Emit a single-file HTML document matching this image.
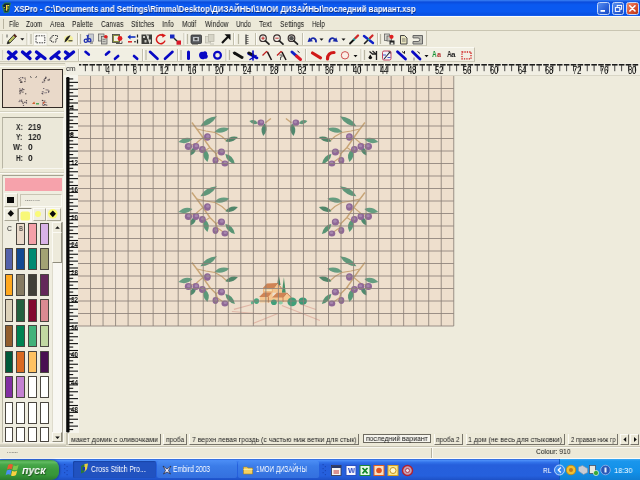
<!DOCTYPE html>
<html><head><meta charset="utf-8"><title>XSPro</title><style>
html,body{margin:0;padding:0;}
body{width:640px;height:480px;overflow:hidden;background:#eeebdc;font-family:"Liberation Sans",sans-serif;position:relative;}
div,svg,span.t{position:absolute;}
svg{overflow:visible;}
span.t{white-space:nowrap;line-height:1;transform-origin:0 50%;will-change:transform;}
</style></head>
<body>
<div style="left:0px;top:0px;width:640px;height:16px;background:linear-gradient(#3c82f4 0,#0a4cdc 13%,#0a59f0 30%,#0a59f0 72%,#0850e2 90%,#1662f2 100%);"></div>
<svg style="left:0px;top:0px" width="14" height="16" viewBox="0 0 14 16" ><path d="M2.4 5.2 L4.8 3 L10.4 3 L8.6 12 L4.4 12.6z" fill="#14243c" stroke="#2c8a3c" stroke-width="0.9"/><rect x="6" y="5" width="1.3" height="5.7" fill="#f0dc3c"/><rect x="7.3" y="5" width="1.9" height="1.3" fill="#f0dc3c"/><rect x="7.3" y="7.5" width="1.3" height="1.1" fill="#e8d038"/><rect x="3.7" y="7" width="1.1" height="1.1" fill="#d8e040"/><rect x="4.4" y="9.3" width="1" height="1" fill="#9ccc3c"/></svg>
<span class="t" style="left:14px;top:4.95px;font-size:8.5px;color:#fff;font-weight:bold;transform:scaleX(0.930);text-shadow:0.6px 0.6px 0 #0a2a80;">XSPro - C:\Documents and Settings\Rimma\Desktop\ДИЗАЙНЫ\1МОИ ДИЗАЙНЫ\последний вариант.xsp</span>
<div style="left:597px;top:2px;width:12.5px;height:12.5px;border:1px solid #c4d6f8;border-radius:2.5px;box-sizing:border-box;background:linear-gradient(135deg,#5a90f0,#2a60d8 60%,#1c4cc0);"><svg style="left:0px;top:0px" width="11" height="11" viewBox="0 0 11 11" ><rect x="2.5" y="7" width="4.5" height="1.8" fill="#fff"/></svg></div>
<div style="left:611.5px;top:2px;width:12.5px;height:12.5px;border:1px solid #c4d6f8;border-radius:2.5px;box-sizing:border-box;background:linear-gradient(135deg,#5a90f0,#2a60d8 60%,#1c4cc0);"><svg style="left:0px;top:0px" width="11" height="11" viewBox="0 0 11 11" ><rect x="4.2" y="2.4" width="4.4" height="3.8" fill="none" stroke="#fff" stroke-width="1"/><rect x="2.4" y="4.6" width="4.4" height="3.8" fill="#2b5fd8" stroke="#fff" stroke-width="1"/></svg></div>
<div style="left:626px;top:2px;width:12.5px;height:12.5px;border:1px solid #c4d6f8;border-radius:2.5px;box-sizing:border-box;background:linear-gradient(135deg,#f09070,#d85030 55%,#b83818);"><svg style="left:0px;top:0px" width="11" height="11" viewBox="0 0 11 11" ><path d="M2.8 2.8 L8 8 M8 2.8 L2.8 8" stroke="#fff" stroke-width="1.6" stroke-linecap="round"/></svg></div>
<div style="left:0px;top:16px;width:640px;height:14.5px;background:#ece9d8;border-top:1.5px solid #fdfdfa;border-bottom:1px solid #c9c5b2;box-sizing:border-box;"></div>
<div style="left:2.5px;top:19px;width:1px;height:10px;background:#b8b4a0;"></div>
<span class="t" style="left:8.7px;top:20.3px;font-size:8.3px;color:#111;transform:scaleX(0.740);">File</span>
<span class="t" style="left:26.2px;top:20.3px;font-size:8.3px;color:#111;transform:scaleX(0.768);">Zoom</span>
<span class="t" style="left:50px;top:20.3px;font-size:8.3px;color:#111;transform:scaleX(0.810);">Area</span>
<span class="t" style="left:72px;top:20.3px;font-size:8.3px;color:#111;transform:scaleX(0.813);">Palette</span>
<span class="t" style="left:100.5px;top:20.3px;font-size:8.3px;color:#111;transform:scaleX(0.800);">Canvas</span>
<span class="t" style="left:130.5px;top:20.3px;font-size:8.3px;color:#111;transform:scaleX(0.789);">Stitches</span>
<span class="t" style="left:162px;top:20.3px;font-size:8.3px;color:#111;transform:scaleX(0.852);">Info</span>
<span class="t" style="left:182px;top:20.3px;font-size:8.3px;color:#111;transform:scaleX(0.790);">Motif</span>
<span class="t" style="left:204.5px;top:20.3px;font-size:8.3px;color:#111;transform:scaleX(0.796);">Window</span>
<span class="t" style="left:235.5px;top:20.3px;font-size:8.3px;color:#111;transform:scaleX(0.756);">Undo</span>
<span class="t" style="left:259.2px;top:20.3px;font-size:8.3px;color:#111;transform:scaleX(0.828);">Text</span>
<span class="t" style="left:280px;top:20.3px;font-size:8.3px;color:#111;transform:scaleX(0.807);">Settings</span>
<span class="t" style="left:311.8px;top:20.3px;font-size:8.3px;color:#111;transform:scaleX(0.744);">Help</span>
<div style="left:0px;top:30.5px;width:426.5px;height:15.5px;background:#f1efe3;border-bottom:1px solid #cfccba;border-right:1px solid #c4c0ae;box-sizing:border-box;"></div>
<div style="left:0px;top:46.5px;width:474.5px;height:15.8px;background:#f1efe3;border-bottom:1px solid #cfccba;border-right:1px solid #c4c0ae;box-sizing:border-box;border-top:1px solid #faf9f2;"></div>
<svg style="left:0px;top:30.5px" width="640" height="16" viewBox="0 0 640 16" ><path d="M2.5 3 V13" stroke="#d2cfbf" stroke-width="1.1"/><path d="M7.2 12.8 L8.2 10 L14.5 3.2 L16.6 5.2 L10 12z" fill="#b8c060" stroke="#222" stroke-width="0.8"/><path d="M14.5 3.2 L16.6 5.2 L15.4 6.4 L13.4 4.4z" fill="#5a1c1c"/><path d="M7.2 12.8 L8.2 10 L10 12z" fill="#222"/><path d="M7 3.5 v3" stroke="#333" stroke-width="0.8"/><path d="M20.3 7.3 h4 l-2 2.2z" fill="#111"/><path d="M27 2 V14" stroke="#c2bfad" stroke-width="1"/><path d="M28 2 V14" stroke="#fbfaf5" stroke-width="1"/><path d="M31 3 V13" stroke="#b9b6a3" stroke-width="1.2"/><rect x="33.5" y="2" width="13.5" height="12.5" fill="#fbfaf6" stroke="#d8d5c6" stroke-width="0.6"/><rect x="36" y="4.8" width="8.8" height="7" fill="none" stroke="#333" stroke-width="0.9" stroke-dasharray="1.6 0.9"/><path d="M50 7 h2 v-2.5 h5.5 v3 h-1.5 v3.5 h-4.5 v-1.5 h-1.5z" fill="none" stroke="#333" stroke-width="0.9" stroke-dasharray="1.6 0.9"/><ellipse cx="68.5" cy="8" rx="4.5" ry="3.5" fill="#f4f0a0"/><path d="M64.5 11.5 C65 7 68 4.5 70.5 4.5 C69 7 67.5 10 64.5 11.5z" fill="#222"/><path d="M68.5 9.8 h4" stroke="#222" stroke-width="1"/><path d="M77.5 2 V14" stroke="#c2bfad" stroke-width="1"/><path d="M78.5 2 V14" stroke="#fbfaf5" stroke-width="1"/><path d="M80.5 3 V13" stroke="#b9b6a3" stroke-width="1.2"/><rect x="88.5" y="3" width="5" height="7.5" fill="#c8ccd0" stroke="#778" stroke-width="0.6"/><circle cx="85.8" cy="9.8" r="1.6" fill="none" stroke="#2030b0" stroke-width="1.3"/><circle cx="89.3" cy="9.3" r="1.6" fill="none" stroke="#2030b0" stroke-width="1.3"/><path d="M87 8 L88.5 4 M88.6 8 L86.8 4" stroke="#2030b0" stroke-width="1.1"/><path d="M90 12 h3" stroke="#555" stroke-width="1"/><rect x="98.5" y="3" width="5.5" height="7" fill="#d8d8d0" stroke="#555" stroke-width="0.7"/><rect x="101.5" y="5.5" width="5.5" height="7.5" fill="#c8c8c0" stroke="#555" stroke-width="0.7"/><circle cx="105.8" cy="5.8" r="1.8" fill="#e02020"/><path d="M102.5 8.5h3M102.5 10.5h3" stroke="#666" stroke-width="0.6"/><rect x="112.5" y="3.5" width="7" height="8" fill="#8a9040" stroke="#444" stroke-width="0.8"/><rect x="114" y="5" width="4.5" height="5" fill="#f0f0e0"/><circle cx="120" cy="7.5" r="2.4" fill="#e02020"/><path d="M116 12.5 h6 v-2" stroke="#444" stroke-width="0.9" fill="none"/><path d="M128.5 6 h7" stroke="#1030c0" stroke-width="1.6"/><path d="M127.5 6 l3 -2.6 v5.2z" fill="#1030c0"/><path d="M128 10.8 h4" stroke="#e02020" stroke-width="1.5"/><path d="M137.5 3.5 v3 M137.5 8.5 v4" stroke="#222" stroke-width="1.2"/><path d="M134 10.8 h2" stroke="#222" stroke-width="1"/><rect x="141.5" y="3.5" width="10.5" height="9.5" fill="#3c3c38"/><path d="M143 5h2v2h-2zM147 4.5h2v3h-2zM144.5 9h2v2.5h-2zM149 8.5h2v3h-2z" fill="#c8c8c0"/><path d="M146.5 3.5 l3.5 9.5" stroke="#e8e8e0" stroke-width="0.9"/><path d="M163.2 4.6 A4.4 4.4 0 1 0 165 9.6" fill="none" stroke="#d81818" stroke-width="1.5"/><path d="M161.8 2.6 l4.2 1.6 l-3.4 2.6z" fill="#d81818"/><rect x="170" y="3.5" width="4.5" height="4" fill="#1828c0"/><rect x="176.5" y="9.5" width="4.5" height="4.2" fill="#d81828"/><path d="M174 7.2 l3 2.8" stroke="#222" stroke-width="1.3"/><path d="M184 2 V14" stroke="#c2bfad" stroke-width="1"/><path d="M185 2 V14" stroke="#fbfaf5" stroke-width="1"/><path d="M187.5 3 V13" stroke="#b9b6a3" stroke-width="1.2"/><rect x="191" y="4" width="10.5" height="8.5" rx="1" fill="#55585c" stroke="#333" stroke-width="0.8"/><rect x="193" y="6" width="6" height="4.2" fill="#c0c4c8"/><path d="M194.5 7 h3 v2.2 h-3z" fill="#444"/><path d="M192 13.2 h6" stroke="#555" stroke-width="0.8"/><rect x="205.5" y="5.5" width="5" height="6.5" fill="#deddd0" stroke="#b8b6a8" stroke-width="0.7"/><rect x="208.5" y="3.5" width="5.5" height="7" fill="#d6d4c6" stroke="#b4b2a4" stroke-width="0.7"/><path d="M210 13 h4" stroke="#b8b6a8" stroke-width="0.8"/><path d="M222 12 L228.5 5.2" stroke="#111" stroke-width="2.1"/><path d="M224.5 3.3 h6 v6z" fill="#111"/><path d="M233.5 2 V14" stroke="#c2bfad" stroke-width="1"/><path d="M234.5 2 V14" stroke="#fbfaf5" stroke-width="1"/><path d="M238.5 3 V13" stroke="#b9b6a3" stroke-width="1.2"/><path d="M246 3.5 v10" stroke="#222" stroke-width="1.1"/><path d="M246 4.5h2.5M246 6.5h2.5M246 8.5h2.5M246 10.5h2.5M246 12.5h2.5" stroke="#444" stroke-width="0.7"/><path d="M255.5 2 V14" stroke="#c2bfad" stroke-width="1"/><path d="M256.5 2 V14" stroke="#fbfaf5" stroke-width="1"/><circle cx="263" cy="7.2" r="3.3" fill="#f0ece4" stroke="#3a3030" stroke-width="1.2"/><path d="M265.4 9.8 l3.6 3.4" stroke="#222" stroke-width="1.7" stroke-linecap="round"/><path d="M261.3 7.2 h3.4 M263 5.5 v3.4" stroke="#c02020" stroke-width="0.9"/><circle cx="277" cy="7.2" r="3.3" fill="#f0ece4" stroke="#3a3030" stroke-width="1.2"/><path d="M279.4 9.8 l3.6 3.4" stroke="#222" stroke-width="1.7" stroke-linecap="round"/><path d="M275.3 7.2 h3.4" stroke="#c02020" stroke-width="0.9"/><circle cx="291.5" cy="7.2" r="3.3" fill="#f0ece4" stroke="#3a3030" stroke-width="1.2"/><path d="M293.9 9.8 l3.6 3.4" stroke="#222" stroke-width="1.7" stroke-linecap="round"/><circle cx="291.5" cy="7.2" r="2.3" fill="#555"/><path d="M302.5 2 V14" stroke="#c2bfad" stroke-width="1"/><path d="M303.5 2 V14" stroke="#fbfaf5" stroke-width="1"/><path d="M316 11.3 C316.4 7 312.4 6 310.6 8.8" fill="none" stroke="#1828a8" stroke-width="1.8"/><path d="M307.6 11 L309.2 6.4 L313 10.2z" fill="#1828a8"/><path d="M319.5 7.5 h4 l-2 2.2z" fill="#111"/><path d="M329.5 11.3 C329.1 7 333.1 6 334.9 8.8" fill="none" stroke="#1828a8" stroke-width="1.8"/><path d="M337.9 11 L336.3 6.4 L332.5 10.2z" fill="#1828a8"/><path d="M341.5 7.5 h4 l-2 2.2z" fill="#111"/><path d="M350 12.5 L354 8.5" stroke="#111" stroke-width="1.8" stroke-linecap="round"/><path d="M353.5 9 L355.5 7" stroke="#18a0a0" stroke-width="2"/><path d="M355.5 7 L358 4.5" stroke="#d02828" stroke-width="2.4" stroke-linecap="round"/><path d="M364 5 L373 12" stroke="#1020c8" stroke-width="2.4" stroke-linecap="round"/><path d="M364.5 12.5 L368 9" stroke="#222" stroke-width="1.6" stroke-linecap="round"/><path d="M368 9 L370 7" stroke="#18a0a0" stroke-width="1.8"/><path d="M370 7 L372.5 4.5" stroke="#d02828" stroke-width="2.2" stroke-linecap="round"/><path d="M377.5 2 V14" stroke="#c2bfad" stroke-width="1"/><path d="M378.5 2 V14" stroke="#fbfaf5" stroke-width="1"/><path d="M380.5 3 V13" stroke="#b9b6a3" stroke-width="1.2"/><rect x="384.5" y="3" width="5" height="6.5" fill="#d8d8d0" stroke="#555" stroke-width="0.7"/><rect x="387" y="5" width="4.5" height="5" fill="#c8c8c0" stroke="#555" stroke-width="0.7"/><circle cx="391.5" cy="5.8" r="2.1" fill="#e02020"/><rect x="389.5" y="9.5" width="5" height="4" fill="#222"/><rect x="390.7" y="11.5" width="2.6" height="2" fill="#e8e8e0"/><path d="M400.5 4.5 h4 l2.5 2.5 v6 h-6.5z" fill="#e8e4c0" stroke="#333" stroke-width="0.9"/><path d="M402 8 h3.5 M402 10 h3.5" stroke="#555" stroke-width="0.7"/><path d="M413 4.5 h9.5 v8.5 h-9.5 v-2.5 h5 a1.8 1.8 0 0 0 0 -3.6 h-5z" fill="#b8b8b0" stroke="#666" stroke-width="1"/></svg>
<svg style="left:0px;top:46.5px" width="640" height="16" viewBox="0 0 640 16" ><path d="M2.5 3 V13" stroke="#d2cfbf" stroke-width="1.1"/><path d="M8.5 5 L16 11.5 M16 5 L8.5 11.5" stroke="#0808c4" stroke-width="3.4" stroke-linecap="round" fill="none"/><path d="M22.5 5 L30 11.5 M30 5 L26.3 8.2" stroke="#0808c4" stroke-width="3.4" stroke-linecap="round" fill="none"/><path d="M36.5 5 L45 11.5 M36.8 11.5 L40.6 8.2" stroke="#0808c4" stroke-width="3.4" stroke-linecap="round" fill="none"/><path d="M59 5 L51 11.5 M59.2 11.5 L55 8.2" stroke="#0808c4" stroke-width="3.4" stroke-linecap="round" fill="none"/><path d="M73.5 5 L65.5 11.5 M65.5 5 L69.5 8.2" stroke="#0808c4" stroke-width="3.4" stroke-linecap="round" fill="none"/><path d="M78.5 2 V14" stroke="#c2bfad" stroke-width="1"/><path d="M79.5 2 V14" stroke="#fbfaf5" stroke-width="1"/><path d="M85.5 4.8 L88.8 7.6" stroke="#0808c4" stroke-width="2.6" stroke-linecap="round" fill="none"/><path d="M109.2 4.8 L106 7.6" stroke="#0808c4" stroke-width="2.6" stroke-linecap="round" fill="none"/><path d="M118.2 9 L115 11.8" stroke="#0808c4" stroke-width="2.6" stroke-linecap="round" fill="none"/><path d="M134 9 L137.2 11.8" stroke="#0808c4" stroke-width="2.6" stroke-linecap="round" fill="none"/><path d="M142.5 2 V14" stroke="#c2bfad" stroke-width="1"/><path d="M143.5 2 V14" stroke="#fbfaf5" stroke-width="1"/><path d="M146 3 V13" stroke="#b9b6a3" stroke-width="1.2"/><path d="M150 4.8 L157.5 11.8" stroke="#0808c4" stroke-width="2.6" stroke-linecap="round" fill="none"/><path d="M172.5 4.8 L165 11.8" stroke="#0808c4" stroke-width="2.6" stroke-linecap="round" fill="none"/><path d="M177.5 2 V14" stroke="#c2bfad" stroke-width="1"/><path d="M178.5 2 V14" stroke="#fbfaf5" stroke-width="1"/><path d="M181 3 V13" stroke="#b9b6a3" stroke-width="1.2"/><path d="M188.5 5 V11.5" stroke="#0808c4" stroke-width="3" stroke-linecap="round" fill="none"/><path d="M199 8 c0 -3 3 -4 4 -3 c2 -2 5 0 4 2.5 c2 2 0 5 -2.5 4.2 c-2 1.5 -5.5 0 -5.5 -3.7z" fill="#0808c4"/><circle cx="217.5" cy="8.3" r="3.4" fill="none" stroke="#0808c4" stroke-width="2.2"/><path d="M226 2 V14" stroke="#c2bfad" stroke-width="1"/><path d="M227 2 V14" stroke="#fbfaf5" stroke-width="1"/><path d="M229.5 3 V13" stroke="#b9b6a3" stroke-width="1.2"/><path d="M234.5 6 L242 10.5" stroke="#111" stroke-width="3" stroke-linecap="round" fill="none"/><path d="M248.5 6.5 L257 11" stroke="#0808c4" stroke-width="2.6" stroke-linecap="round" fill="none"/><path d="M249 6 L253 8" stroke="#111" stroke-width="2.8" stroke-linecap="round" fill="none"/><path d="M253 4 V13" stroke="#0808c4" stroke-width="1.6" stroke-linecap="round" fill="none"/><path d="M250 12.5 L256 8.5" stroke="#0808c4" stroke-width="1.4" stroke-linecap="round" fill="none"/><path d="M262.5 8.5 L266.5 4.5 L268 5.5" fill="none" stroke="#c02020" stroke-width="1.3"/><path d="M267.5 5.2 L271.5 13" stroke="#221818" stroke-width="1.5"/><path d="M277 8.5 L281 4.5 L282.5 5.5" fill="none" stroke="#c02020" stroke-width="1.3"/><path d="M282 5.2 L286 13" stroke="#221818" stroke-width="1.5"/><path d="M279.5 8 h2.5 v2 h-1.5 v3" stroke="#555" stroke-width="1" fill="none"/><path d="M292 5 L296.5 9" stroke="#1020c8" stroke-width="3" stroke-linecap="round" fill="none"/><path d="M296.5 9 L300.5 12.5" stroke="#d81828" stroke-width="3" stroke-linecap="round" fill="none"/><path d="M297.5 4 l2 1.5" stroke="#222" stroke-width="1"/><path d="M305.5 2 V14" stroke="#c2bfad" stroke-width="1"/><path d="M306.5 2 V14" stroke="#fbfaf5" stroke-width="1"/><path d="M312.5 6 L320.5 10.8" stroke="#d01818" stroke-width="3.2" stroke-linecap="round" fill="none"/><path d="M327.5 12 C327.5 8 330 5.5 334 5.5" fill="none" stroke="#d01818" stroke-width="3.2" stroke-linecap="round"/><circle cx="345" cy="8.3" r="3.7" fill="#fbeee6" stroke="#c84040" stroke-width="0.9"/><path d="M353.5 8 h4 l-2 2.2z" fill="#111"/><path d="M361 2 V14" stroke="#c2bfad" stroke-width="1"/><path d="M362 2 V14" stroke="#fbfaf5" stroke-width="1"/><path d="M364.5 3 V13" stroke="#b9b6a3" stroke-width="1.2"/><path d="M369.5 4.5 L373 7.5 M376.5 4 V13 M372 7 h4.5" stroke="#222" stroke-width="1.3" fill="none"/><path d="M368.5 10.5 a1.8 1.8 0 1 0 3.6 0 l-1.8 -3z" fill="#111"/><path d="M372.5 4 l3.5 3" stroke="#222" stroke-width="1.2"/><rect x="382.5" y="4" width="8.5" height="9" rx="1.5" fill="#eef0f8" stroke="#c03050" stroke-width="0.9"/><path d="M384 12 L390 5" stroke="#223" stroke-width="1.1"/><path d="M383 8 h3 M387.5 10.5 h3" stroke="#3040c0" stroke-width="0.9"/><path d="M388 4.5 h2.5 v2.5z" fill="#222"/><path d="M397.5 4.8 L405.5 12" stroke="#0808c4" stroke-width="2.8" stroke-linecap="round" fill="none"/><path d="M402 4.5 l2.5 2 M404.5 4 v2.5" stroke="#222" stroke-width="1"/><path d="M412.5 4.8 L420 12" stroke="#0808c4" stroke-width="2.8" stroke-linecap="round" fill="none"/><path d="M417.5 4.5 l2.5 2" stroke="#222" stroke-width="1"/><path d="M414 10.5 v3" stroke="#666" stroke-width="0.8"/><path d="M424.5 8 h4 l-2 2.2z" fill="#111"/><path d="M462 5 h9 v6.8 h-9z" fill="none" stroke="#d02020" stroke-width="1.3" stroke-dasharray="1.3 1.1"/></svg>
<span class="t" style="left:432px;top:50.25px;font-size:8.5px;color:#109030;font-weight:bold;transform:scaleX(0.733);">A</span>
<span class="t" style="left:436.5px;top:51.2px;font-size:8px;color:#b02828;font-weight:bold;transform:scaleX(0.898);">a</span>
<span class="t" style="left:446.5px;top:50.25px;font-size:8.5px;color:#222;font-weight:bold;transform:scaleX(0.733);">A</span>
<span class="t" style="left:451px;top:51.2px;font-size:8px;color:#222;font-weight:bold;transform:scaleX(1.011);">a</span>
<div style="left:0px;top:62.5px;width:66px;height:381px;background:#ece9d8;"></div>
<div style="left:0px;top:63px;width:65px;height:1px;background:#c8c5b4;"></div>
<div style="left:0px;top:66px;width:65px;height:1px;background:#fbfaf4;"></div>
<div style="left:2px;top:69px;width:61px;height:39px;background:#e9d9c9;border:1.6px solid #332b26;box-sizing:border-box;"></div>
<svg style="left:0px;top:0px" width="66" height="110" viewBox="0 0 66 110" ><rect x="20.2" y="77.1" width="1.2" height="1" fill="#7a7078"/><rect x="22.0" y="77.0" width="1.2" height="1" fill="#5a5058"/><rect x="21.5" y="81.6" width="1.2" height="1" fill="#5a5058"/><rect x="20.1" y="79.5" width="1.2" height="1" fill="#403838"/><rect x="24.3" y="81.1" width="1.2" height="1" fill="#403838"/><rect x="20.1" y="81.7" width="1.2" height="1" fill="#403838"/><rect x="24.4" y="77.6" width="1.2" height="1" fill="#403838"/><rect x="20.6" y="81.4" width="1.2" height="1" fill="#403838"/><rect x="19.1" y="79.9" width="1.2" height="1" fill="#7a7078"/><rect x="22.2" y="77.5" width="1.2" height="1" fill="#7a7078"/><rect x="20.6" y="81.8" width="1.2" height="1" fill="#403838"/><rect x="18.6" y="78.1" width="1.2" height="1" fill="#403838"/><rect x="24.8" y="79.3" width="1.2" height="1" fill="#7a7078"/><rect x="21.6" y="89.6" width="1.2" height="1" fill="#7a7078"/><rect x="19.7" y="89.7" width="1.2" height="1" fill="#5a5058"/><rect x="19.1" y="90.6" width="1.2" height="1" fill="#403838"/><rect x="22.3" y="91.6" width="1.2" height="1" fill="#403838"/><rect x="19.6" y="91.8" width="1.2" height="1" fill="#5a5058"/><rect x="21.6" y="89.1" width="1.2" height="1" fill="#7a7078"/><rect x="20.5" y="90.0" width="1.2" height="1" fill="#403838"/><rect x="23.2" y="89.1" width="1.2" height="1" fill="#403838"/><rect x="19.2" y="88.3" width="1.2" height="1" fill="#6a6068"/><rect x="20.6" y="91.3" width="1.2" height="1" fill="#6a6068"/><rect x="19.4" y="93.2" width="1.2" height="1" fill="#403838"/><rect x="21.9" y="88.2" width="1.2" height="1" fill="#5a5058"/><rect x="25.1" y="93.3" width="1.2" height="1" fill="#403838"/><rect x="18.6" y="101.1" width="1.2" height="1" fill="#6a6068"/><rect x="24.2" y="101.8" width="1.2" height="1" fill="#5a5058"/><rect x="20.7" y="100.6" width="1.2" height="1" fill="#7a7078"/><rect x="20.7" y="100.9" width="1.2" height="1" fill="#6a6068"/><rect x="21.0" y="99.6" width="1.2" height="1" fill="#5a5058"/><rect x="21.9" y="101.5" width="1.2" height="1" fill="#403838"/><rect x="25.9" y="102.7" width="1.2" height="1" fill="#7a7078"/><rect x="25.8" y="101.9" width="1.2" height="1" fill="#6a6068"/><rect x="19.3" y="99.8" width="1.2" height="1" fill="#6a6068"/><rect x="22.9" y="104.9" width="1.2" height="1" fill="#5a5058"/><rect x="22.5" y="102.8" width="1.2" height="1" fill="#403838"/><rect x="25.9" y="100.2" width="1.2" height="1" fill="#403838"/><rect x="24.2" y="101.8" width="1.2" height="1" fill="#6a6068"/><rect x="45.0" y="77.9" width="1.2" height="1" fill="#7a7078"/><rect x="45.1" y="77.7" width="1.2" height="1" fill="#7a7078"/><rect x="43.3" y="81.5" width="1.2" height="1" fill="#6a6068"/><rect x="45.2" y="76.7" width="1.2" height="1" fill="#403838"/><rect x="43.4" y="79.4" width="1.2" height="1" fill="#6a6068"/><rect x="44.6" y="78.0" width="1.2" height="1" fill="#403838"/><rect x="41.9" y="81.7" width="1.2" height="1" fill="#5a5058"/><rect x="48.8" y="78.8" width="1.2" height="1" fill="#5a5058"/><rect x="45.2" y="77.0" width="1.2" height="1" fill="#6a6068"/><rect x="48.4" y="79.7" width="1.2" height="1" fill="#6a6068"/><rect x="44.0" y="80.2" width="1.2" height="1" fill="#403838"/><rect x="47.5" y="79.5" width="1.2" height="1" fill="#403838"/><rect x="44.0" y="78.7" width="1.2" height="1" fill="#7a7078"/><rect x="42.1" y="93.4" width="1.2" height="1" fill="#6a6068"/><rect x="41.8" y="93.0" width="1.2" height="1" fill="#6a6068"/><rect x="47.2" y="89.5" width="1.2" height="1" fill="#5a5058"/><rect x="47.9" y="91.9" width="1.2" height="1" fill="#7a7078"/><rect x="45.7" y="92.2" width="1.2" height="1" fill="#7a7078"/><rect x="43.1" y="88.0" width="1.2" height="1" fill="#6a6068"/><rect x="41.6" y="92.9" width="1.2" height="1" fill="#5a5058"/><rect x="44.4" y="92.3" width="1.2" height="1" fill="#7a7078"/><rect x="48.0" y="91.1" width="1.2" height="1" fill="#6a6068"/><rect x="42.7" y="91.4" width="1.2" height="1" fill="#7a7078"/><rect x="48.3" y="90.5" width="1.2" height="1" fill="#5a5058"/><rect x="41.8" y="91.3" width="1.2" height="1" fill="#7a7078"/><rect x="45.6" y="89.4" width="1.2" height="1" fill="#6a6068"/><rect x="41.8" y="99.9" width="1.2" height="1" fill="#5a5058"/><rect x="43.7" y="101.4" width="1.2" height="1" fill="#5a5058"/><rect x="42.1" y="102.5" width="1.2" height="1" fill="#7a7078"/><rect x="43.0" y="105.0" width="1.2" height="1" fill="#7a7078"/><rect x="43.2" y="102.2" width="1.2" height="1" fill="#7a7078"/><rect x="42.2" y="100.1" width="1.2" height="1" fill="#403838"/><rect x="45.3" y="101.9" width="1.2" height="1" fill="#7a7078"/><rect x="42.0" y="104.4" width="1.2" height="1" fill="#6a6068"/><rect x="46.2" y="104.7" width="1.2" height="1" fill="#7a7078"/><rect x="44.6" y="104.0" width="1.2" height="1" fill="#6a6068"/><rect x="44.2" y="100.4" width="1.2" height="1" fill="#6a6068"/><rect x="43.9" y="104.3" width="1.2" height="1" fill="#403838"/><rect x="45.5" y="104.6" width="1.2" height="1" fill="#6a6068"/><path d="M30 76.5 l1.5 1 M37 76.5 l-1.5 1" stroke="#444" stroke-width="1"/><path d="M32 104 l2.2 -2.5 l1 2.5z" fill="#d06030"/><path d="M36 103.800 h3" stroke="#30a040" stroke-width="1.2"/><path d="M43 103.5 l1.5 -1.5" stroke="#d05030" stroke-width="1.2"/></svg>
<div style="left:0px;top:112px;width:65px;height:1px;background:#fbfaf4;"></div>
<div style="left:0px;top:111px;width:65px;height:1px;background:#d4d1c0;"></div>
<div style="left:2px;top:116.5px;width:61.5px;height:52px;background:#ebe8d9;border:1px solid #f8f7f0;border-top:1.5px solid #9c998a;border-left:1px solid #b8b5a4;box-sizing:border-box;"></div>
<span class="t" style="left:15.5px;top:122.75px;font-size:8.5px;color:#222;font-weight:bold;transform:scaleX(0.800);">X:</span>
<span class="t" style="left:28px;top:122.75px;font-size:8.5px;color:#222;font-weight:bold;transform:scaleX(0.916);">219</span>
<span class="t" style="left:16px;top:132.75px;font-size:8.5px;color:#222;font-weight:bold;transform:scaleX(0.800);">Y:</span>
<span class="t" style="left:28px;top:132.75px;font-size:8.5px;color:#222;font-weight:bold;transform:scaleX(0.916);">120</span>
<span class="t" style="left:13px;top:142.75px;font-size:8.5px;color:#222;font-weight:bold;transform:scaleX(0.869);">W:</span>
<span class="t" style="left:28px;top:142.75px;font-size:8.5px;color:#222;font-weight:bold;transform:scaleX(0.950);">0</span>
<span class="t" style="left:15.5px;top:153.75px;font-size:8.5px;color:#222;font-weight:bold;transform:scaleX(0.757);">H:</span>
<span class="t" style="left:28px;top:153.75px;font-size:8.5px;color:#222;font-weight:bold;transform:scaleX(0.950);">0</span>
<div style="left:0px;top:171.5px;width:65px;height:1px;background:#d4d1c0;"></div>
<div style="left:0px;top:172.5px;width:65px;height:1px;background:#fbfaf4;"></div>
<div style="left:2px;top:175px;width:61.5px;height:267.8px;background:#efede0;border:1px solid #f8f7f0;border-top:1.5px solid #a4a192;border-left:1px solid #b8b5a4;box-sizing:border-box;"></div>
<div style="left:4.5px;top:177.5px;width:57.5px;height:13.5px;background:#f6a2ab;"></div>
<div style="left:4px;top:193px;width:13.5px;height:14px;border:1px solid #fbfaf4;border-right-color:#c0bdac;border-bottom-color:#c0bdac;box-sizing:border-box;"></div>
<div style="left:7px;top:197px;width:7px;height:6px;background:#0a0a0a;"></div>
<div style="left:20px;top:193.5px;width:42px;height:13.5px;border:1px solid #c8c5b4;border-right-color:#fbfaf4;border-bottom-color:#fbfaf4;box-sizing:border-box;"></div>
<span class="t" style="left:25px;top:196.5px;font-size:6px;color:#444;transform:scaleX(0.695);letter-spacing:0.7px;">--------</span>
<div style="left:4px;top:207.5px;width:13.5px;height:13px;border:1px solid #fbfaf4;border-right-color:#aaa796;border-bottom-color:#aaa796;box-sizing:border-box;"></div>
<div style="left:18px;top:207.5px;width:14px;height:14px;background:#f8f7ef;border:1px solid #8a8778;border-right-color:#fbfaf4;border-bottom-color:#fbfaf4;box-sizing:border-box;"></div>
<div style="left:32.5px;top:207.5px;width:13px;height:13px;border:1px solid #fbfaf4;border-right-color:#aaa796;border-bottom-color:#aaa796;box-sizing:border-box;"></div>
<div style="left:46px;top:207.5px;width:15px;height:13px;border:1px solid #fbfaf4;border-right-color:#aaa796;border-bottom-color:#aaa796;box-sizing:border-box;"></div>
<svg style="left:0px;top:0px" width="66" height="222" viewBox="0 0 66 222" ><path d="M10.8 210 l3.2 3.4 l-3.2 3.4 l-3.2 -3.4z" fill="#0a0a0a"/><rect x="20.5" y="211.4" width="9.5" height="9.2" rx="2.2" fill="#f8f878"/><circle cx="38" cy="214" r="3" fill="#fafa78"/><circle cx="52.8" cy="213.8" r="4.8" fill="#fafa70"/><path d="M52.8 210.4 l3.2 3.4 l-3.2 3.4 l-3.2 -3.4z" fill="#0a0a0a"/></svg>
<div style="left:16.3px;top:222.5px;width:8.7px;height:22.3px;background:#e9d9c9;border:1px solid #4a4640;box-sizing:border-box;border-radius:0.5px;"></div>
<div style="left:28.2px;top:222.5px;width:8.7px;height:22.3px;background:#f4a0a8;border:1px solid #4a4640;box-sizing:border-box;border-radius:0.5px;"></div>
<div style="left:40.1px;top:222.5px;width:8.7px;height:22.3px;background:#d9b2e8;border:1px solid #4a4640;box-sizing:border-box;border-radius:0.5px;"></div>
<div style="left:4.5px;top:248.1px;width:8.7px;height:22.3px;background:#5462aa;border:1px solid #4a4640;box-sizing:border-box;border-radius:0.5px;"></div>
<div style="left:16.3px;top:248.1px;width:8.7px;height:22.3px;background:#134a92;border:1px solid #4a4640;box-sizing:border-box;border-radius:0.5px;"></div>
<div style="left:28.2px;top:248.1px;width:8.7px;height:22.3px;background:#008a72;border:1px solid #4a4640;box-sizing:border-box;border-radius:0.5px;"></div>
<div style="left:40.1px;top:248.1px;width:8.7px;height:22.3px;background:#a3a274;border:1px solid #4a4640;box-sizing:border-box;border-radius:0.5px;"></div>
<div style="left:4.5px;top:273.7px;width:8.7px;height:22.3px;background:#ffa81e;border:1px solid #4a4640;box-sizing:border-box;border-radius:0.5px;"></div>
<div style="left:16.3px;top:273.7px;width:8.7px;height:22.3px;background:#857a62;border:1px solid #4a4640;box-sizing:border-box;border-radius:0.5px;"></div>
<div style="left:28.2px;top:273.7px;width:8.7px;height:22.3px;background:#403f38;border:1px solid #4a4640;box-sizing:border-box;border-radius:0.5px;"></div>
<div style="left:40.1px;top:273.7px;width:8.7px;height:22.3px;background:#64285a;border:1px solid #4a4640;box-sizing:border-box;border-radius:0.5px;"></div>
<div style="left:4.5px;top:299.3px;width:8.7px;height:22.3px;background:#dcd2ba;border:1px solid #4a4640;box-sizing:border-box;border-radius:0.5px;"></div>
<div style="left:16.3px;top:299.3px;width:8.7px;height:22.3px;background:#22603f;border:1px solid #4a4640;box-sizing:border-box;border-radius:0.5px;"></div>
<div style="left:28.2px;top:299.3px;width:8.7px;height:22.3px;background:#82082e;border:1px solid #4a4640;box-sizing:border-box;border-radius:0.5px;"></div>
<div style="left:40.1px;top:299.3px;width:8.7px;height:22.3px;background:#da8a92;border:1px solid #4a4640;box-sizing:border-box;border-radius:0.5px;"></div>
<div style="left:4.5px;top:324.9px;width:8.7px;height:22.3px;background:#925f2e;border:1px solid #4a4640;box-sizing:border-box;border-radius:0.5px;"></div>
<div style="left:16.3px;top:324.9px;width:8.7px;height:22.3px;background:#008252;border:1px solid #4a4640;box-sizing:border-box;border-radius:0.5px;"></div>
<div style="left:28.2px;top:324.9px;width:8.7px;height:22.3px;background:#43b27a;border:1px solid #4a4640;box-sizing:border-box;border-radius:0.5px;"></div>
<div style="left:40.1px;top:324.9px;width:8.7px;height:22.3px;background:#c2d8a2;border:1px solid #4a4640;box-sizing:border-box;border-radius:0.5px;"></div>
<div style="left:4.5px;top:350.5px;width:8.7px;height:22.3px;background:#005a3a;border:1px solid #4a4640;box-sizing:border-box;border-radius:0.5px;"></div>
<div style="left:16.3px;top:350.5px;width:8.7px;height:22.3px;background:#d96a22;border:1px solid #4a4640;box-sizing:border-box;border-radius:0.5px;"></div>
<div style="left:28.2px;top:350.5px;width:8.7px;height:22.3px;background:#ffc262;border:1px solid #4a4640;box-sizing:border-box;border-radius:0.5px;"></div>
<div style="left:40.1px;top:350.5px;width:8.7px;height:22.3px;background:#4a1052;border:1px solid #4a4640;box-sizing:border-box;border-radius:0.5px;"></div>
<div style="left:4.5px;top:376.1px;width:8.7px;height:22.3px;background:#822fa2;border:1px solid #4a4640;box-sizing:border-box;border-radius:0.5px;"></div>
<div style="left:16.3px;top:376.1px;width:8.7px;height:22.3px;background:#c482d2;border:1px solid #4a4640;box-sizing:border-box;border-radius:0.5px;"></div>
<div style="left:28.2px;top:376.1px;width:8.7px;height:22.3px;background:#ffffff;border:1px solid #4a4640;box-sizing:border-box;border-radius:0.5px;"></div>
<div style="left:40.1px;top:376.1px;width:8.7px;height:22.3px;background:#ffffff;border:1px solid #4a4640;box-sizing:border-box;border-radius:0.5px;"></div>
<div style="left:4.5px;top:401.7px;width:8.7px;height:22.3px;background:#ffffff;border:1px solid #4a4640;box-sizing:border-box;border-radius:0.5px;"></div>
<div style="left:16.3px;top:401.7px;width:8.7px;height:22.3px;background:#ffffff;border:1px solid #4a4640;box-sizing:border-box;border-radius:0.5px;"></div>
<div style="left:28.2px;top:401.7px;width:8.7px;height:22.3px;background:#ffffff;border:1px solid #4a4640;box-sizing:border-box;border-radius:0.5px;"></div>
<div style="left:40.1px;top:401.7px;width:8.7px;height:22.3px;background:#ffffff;border:1px solid #4a4640;box-sizing:border-box;border-radius:0.5px;"></div>
<div style="left:4.5px;top:427.3px;width:8.7px;height:14.4px;background:#ffffff;border:1px solid #4a4640;box-sizing:border-box;border-radius:0.5px;"></div>
<div style="left:16.3px;top:427.3px;width:8.7px;height:14.4px;background:#ffffff;border:1px solid #4a4640;box-sizing:border-box;border-radius:0.5px;"></div>
<div style="left:28.2px;top:427.3px;width:8.7px;height:14.4px;background:#ffffff;border:1px solid #4a4640;box-sizing:border-box;border-radius:0.5px;"></div>
<div style="left:40.1px;top:427.3px;width:8.7px;height:14.4px;background:#ffffff;border:1px solid #4a4640;box-sizing:border-box;border-radius:0.5px;"></div>
<span class="t" style="left:6.8px;top:224.95px;font-size:7.5px;color:#222;transform:scaleX(0.885);">C</span>
<span class="t" style="left:18.5px;top:224.95px;font-size:7.5px;color:#222;transform:scaleX(0.817);">B</span>
<div style="left:51.5px;top:222px;width:10.5px;height:220px;background:#f8f7f2;border-left:1px solid #dedbcc;box-sizing:border-box;"></div>
<div style="left:51.5px;top:222px;width:10.5px;height:10.5px;background:#edeadb;border:1px solid #fbfaf4;border-right-color:#8f8c7d;border-bottom-color:#8f8c7d;box-sizing:border-box;"><svg style="left:0px;top:0px" width="9" height="9" viewBox="0 0 9 9" ><path d="M2.2 5.8 h4.6 l-2.3 -2.6z" fill="#111"/></svg></div>
<div style="left:51.5px;top:232px;width:10.5px;height:30.5px;background:#edeadb;border:1px solid #fbfaf4;border-right-color:#8f8c7d;border-bottom-color:#8f8c7d;box-sizing:border-box;"></div>
<div style="left:62.2px;top:222px;width:1px;height:220px;background:#a9a698;"></div>
<div style="left:51.5px;top:431.5px;width:10.5px;height:10.5px;background:#edeadb;border:1px solid #fbfaf4;border-right-color:#8f8c7d;border-bottom-color:#8f8c7d;box-sizing:border-box;"><svg style="left:0px;top:0px" width="9" height="9" viewBox="0 0 9 9" ><path d="M2.2 3.4 h4.6 l-2.3 2.6z" fill="#111"/></svg></div>
<div style="left:66px;top:62.5px;width:574px;height:12.5px;background:#f1efe4;"></div>
<div style="left:64px;top:75px;width:14.5px;height:357.5px;background:#f5f4ec;"></div>
<div style="left:78px;top:74.6px;width:562px;height:0.9px;background:#d9d6c6;"></div>
<span class="t" style="left:66.3px;top:64.6px;font-size:8px;color:#222;transform:scaleX(0.871);">cm</span>
<svg style="left:0px;top:62.5px" width="640" height="13" viewBox="0 0 640 13" ><path d="M79.00 1.8 h2.30" stroke="#111" stroke-width="1.5"/><path d="M82.58 1.8 h5.60" stroke="#111" stroke-width="1.5"/><path d="M85.38 2 V8.2" stroke="#333" stroke-width="0.9"/><path d="M89.45 1.8 h5.60" stroke="#111" stroke-width="1.5"/><path d="M92.25 2 V8.2" stroke="#333" stroke-width="0.9"/><path d="M96.33 1.8 h5.60" stroke="#111" stroke-width="1.5"/><path d="M99.12 2 V8.2" stroke="#333" stroke-width="0.9"/><path d="M103.20 1.8 h5.60" stroke="#111" stroke-width="1.5"/><path d="M106.00 2 V8.2" stroke="#333" stroke-width="0.9"/><path d="M110.08 1.8 h5.60" stroke="#111" stroke-width="1.5"/><path d="M112.88 2 V8.2" stroke="#333" stroke-width="0.9"/><path d="M116.95 1.8 h5.60" stroke="#111" stroke-width="1.5"/><path d="M119.75 2 V8.2" stroke="#333" stroke-width="0.9"/><path d="M123.83 1.8 h5.60" stroke="#111" stroke-width="1.5"/><path d="M126.62 2 V8.2" stroke="#333" stroke-width="0.9"/><path d="M130.70 1.8 h5.60" stroke="#111" stroke-width="1.5"/><path d="M133.50 2 V8.2" stroke="#333" stroke-width="0.9"/><path d="M137.57 1.8 h5.60" stroke="#111" stroke-width="1.5"/><path d="M140.38 2 V8.2" stroke="#333" stroke-width="0.9"/><path d="M144.45 1.8 h5.60" stroke="#111" stroke-width="1.5"/><path d="M147.25 2 V8.2" stroke="#333" stroke-width="0.9"/><path d="M151.32 1.8 h5.60" stroke="#111" stroke-width="1.5"/><path d="M154.12 2 V8.2" stroke="#333" stroke-width="0.9"/><path d="M158.20 1.8 h5.60" stroke="#111" stroke-width="1.5"/><path d="M161.00 2 V8.2" stroke="#333" stroke-width="0.9"/><path d="M165.07 1.8 h5.60" stroke="#111" stroke-width="1.5"/><path d="M167.88 2 V8.2" stroke="#333" stroke-width="0.9"/><path d="M171.95 1.8 h5.60" stroke="#111" stroke-width="1.5"/><path d="M174.75 2 V8.2" stroke="#333" stroke-width="0.9"/><path d="M178.82 1.8 h5.60" stroke="#111" stroke-width="1.5"/><path d="M181.62 2 V8.2" stroke="#333" stroke-width="0.9"/><path d="M185.70 1.8 h5.60" stroke="#111" stroke-width="1.5"/><path d="M188.50 2 V8.2" stroke="#333" stroke-width="0.9"/><path d="M192.57 1.8 h5.60" stroke="#111" stroke-width="1.5"/><path d="M195.38 2 V8.2" stroke="#333" stroke-width="0.9"/><path d="M199.45 1.8 h5.60" stroke="#111" stroke-width="1.5"/><path d="M202.25 2 V8.2" stroke="#333" stroke-width="0.9"/><path d="M206.32 1.8 h5.60" stroke="#111" stroke-width="1.5"/><path d="M209.12 2 V8.2" stroke="#333" stroke-width="0.9"/><path d="M213.20 1.8 h5.60" stroke="#111" stroke-width="1.5"/><path d="M216.00 2 V8.2" stroke="#333" stroke-width="0.9"/><path d="M220.07 1.8 h5.60" stroke="#111" stroke-width="1.5"/><path d="M222.88 2 V8.2" stroke="#333" stroke-width="0.9"/><path d="M226.95 1.8 h5.60" stroke="#111" stroke-width="1.5"/><path d="M229.75 2 V8.2" stroke="#333" stroke-width="0.9"/><path d="M233.82 1.8 h5.60" stroke="#111" stroke-width="1.5"/><path d="M236.62 2 V8.2" stroke="#333" stroke-width="0.9"/><path d="M240.70 1.8 h5.60" stroke="#111" stroke-width="1.5"/><path d="M243.50 2 V8.2" stroke="#333" stroke-width="0.9"/><path d="M247.57 1.8 h5.60" stroke="#111" stroke-width="1.5"/><path d="M250.38 2 V8.2" stroke="#333" stroke-width="0.9"/><path d="M254.45 1.8 h5.60" stroke="#111" stroke-width="1.5"/><path d="M257.25 2 V8.2" stroke="#333" stroke-width="0.9"/><path d="M261.32 1.8 h5.60" stroke="#111" stroke-width="1.5"/><path d="M264.12 2 V8.2" stroke="#333" stroke-width="0.9"/><path d="M268.20 1.8 h5.60" stroke="#111" stroke-width="1.5"/><path d="M271.00 2 V8.2" stroke="#333" stroke-width="0.9"/><path d="M275.07 1.8 h5.60" stroke="#111" stroke-width="1.5"/><path d="M277.88 2 V8.2" stroke="#333" stroke-width="0.9"/><path d="M281.95 1.8 h5.60" stroke="#111" stroke-width="1.5"/><path d="M284.75 2 V8.2" stroke="#333" stroke-width="0.9"/><path d="M288.82 1.8 h5.60" stroke="#111" stroke-width="1.5"/><path d="M291.62 2 V8.2" stroke="#333" stroke-width="0.9"/><path d="M295.70 1.8 h5.60" stroke="#111" stroke-width="1.5"/><path d="M298.50 2 V8.2" stroke="#333" stroke-width="0.9"/><path d="M302.57 1.8 h5.60" stroke="#111" stroke-width="1.5"/><path d="M305.38 2 V8.2" stroke="#333" stroke-width="0.9"/><path d="M309.45 1.8 h5.60" stroke="#111" stroke-width="1.5"/><path d="M312.25 2 V8.2" stroke="#333" stroke-width="0.9"/><path d="M316.32 1.8 h5.60" stroke="#111" stroke-width="1.5"/><path d="M319.12 2 V8.2" stroke="#333" stroke-width="0.9"/><path d="M323.20 1.8 h5.60" stroke="#111" stroke-width="1.5"/><path d="M326.00 2 V8.2" stroke="#333" stroke-width="0.9"/><path d="M330.07 1.8 h5.60" stroke="#111" stroke-width="1.5"/><path d="M332.88 2 V8.2" stroke="#333" stroke-width="0.9"/><path d="M336.95 1.8 h5.60" stroke="#111" stroke-width="1.5"/><path d="M339.75 2 V8.2" stroke="#333" stroke-width="0.9"/><path d="M343.82 1.8 h5.60" stroke="#111" stroke-width="1.5"/><path d="M346.62 2 V8.2" stroke="#333" stroke-width="0.9"/><path d="M350.70 1.8 h5.60" stroke="#111" stroke-width="1.5"/><path d="M353.50 2 V8.2" stroke="#333" stroke-width="0.9"/><path d="M357.57 1.8 h5.60" stroke="#111" stroke-width="1.5"/><path d="M360.38 2 V8.2" stroke="#333" stroke-width="0.9"/><path d="M364.45 1.8 h5.60" stroke="#111" stroke-width="1.5"/><path d="M367.25 2 V8.2" stroke="#333" stroke-width="0.9"/><path d="M371.32 1.8 h5.60" stroke="#111" stroke-width="1.5"/><path d="M374.12 2 V8.2" stroke="#333" stroke-width="0.9"/><path d="M378.20 1.8 h5.60" stroke="#111" stroke-width="1.5"/><path d="M381.00 2 V8.2" stroke="#333" stroke-width="0.9"/><path d="M385.07 1.8 h5.60" stroke="#111" stroke-width="1.5"/><path d="M387.88 2 V8.2" stroke="#333" stroke-width="0.9"/><path d="M391.95 1.8 h5.60" stroke="#111" stroke-width="1.5"/><path d="M394.75 2 V8.2" stroke="#333" stroke-width="0.9"/><path d="M398.82 1.8 h5.60" stroke="#111" stroke-width="1.5"/><path d="M401.62 2 V8.2" stroke="#333" stroke-width="0.9"/><path d="M405.70 1.8 h5.60" stroke="#111" stroke-width="1.5"/><path d="M408.50 2 V8.2" stroke="#333" stroke-width="0.9"/><path d="M412.57 1.8 h5.60" stroke="#111" stroke-width="1.5"/><path d="M415.38 2 V8.2" stroke="#333" stroke-width="0.9"/><path d="M419.45 1.8 h5.60" stroke="#111" stroke-width="1.5"/><path d="M422.25 2 V8.2" stroke="#333" stroke-width="0.9"/><path d="M426.32 1.8 h5.60" stroke="#111" stroke-width="1.5"/><path d="M429.12 2 V8.2" stroke="#333" stroke-width="0.9"/><path d="M433.20 1.8 h5.60" stroke="#111" stroke-width="1.5"/><path d="M436.00 2 V8.2" stroke="#333" stroke-width="0.9"/><path d="M440.07 1.8 h5.60" stroke="#111" stroke-width="1.5"/><path d="M442.88 2 V8.2" stroke="#333" stroke-width="0.9"/><path d="M446.95 1.8 h5.60" stroke="#111" stroke-width="1.5"/><path d="M449.75 2 V8.2" stroke="#333" stroke-width="0.9"/><path d="M453.82 1.8 h5.60" stroke="#111" stroke-width="1.5"/><path d="M456.62 2 V8.2" stroke="#333" stroke-width="0.9"/><path d="M460.70 1.8 h5.60" stroke="#111" stroke-width="1.5"/><path d="M463.50 2 V8.2" stroke="#333" stroke-width="0.9"/><path d="M467.57 1.8 h5.60" stroke="#111" stroke-width="1.5"/><path d="M470.38 2 V8.2" stroke="#333" stroke-width="0.9"/><path d="M474.45 1.8 h5.60" stroke="#111" stroke-width="1.5"/><path d="M477.25 2 V8.2" stroke="#333" stroke-width="0.9"/><path d="M481.32 1.8 h5.60" stroke="#111" stroke-width="1.5"/><path d="M484.12 2 V8.2" stroke="#333" stroke-width="0.9"/><path d="M488.20 1.8 h5.60" stroke="#111" stroke-width="1.5"/><path d="M491.00 2 V8.2" stroke="#333" stroke-width="0.9"/><path d="M495.07 1.8 h5.60" stroke="#111" stroke-width="1.5"/><path d="M497.88 2 V8.2" stroke="#333" stroke-width="0.9"/><path d="M501.95 1.8 h5.60" stroke="#111" stroke-width="1.5"/><path d="M504.75 2 V8.2" stroke="#333" stroke-width="0.9"/><path d="M508.82 1.8 h5.60" stroke="#111" stroke-width="1.5"/><path d="M511.62 2 V8.2" stroke="#333" stroke-width="0.9"/><path d="M515.70 1.8 h5.60" stroke="#111" stroke-width="1.5"/><path d="M518.50 2 V8.2" stroke="#333" stroke-width="0.9"/><path d="M522.58 1.8 h5.60" stroke="#111" stroke-width="1.5"/><path d="M525.38 2 V8.2" stroke="#333" stroke-width="0.9"/><path d="M529.45 1.8 h5.60" stroke="#111" stroke-width="1.5"/><path d="M532.25 2 V8.2" stroke="#333" stroke-width="0.9"/><path d="M536.33 1.8 h5.60" stroke="#111" stroke-width="1.5"/><path d="M539.12 2 V8.2" stroke="#333" stroke-width="0.9"/><path d="M543.20 1.8 h5.60" stroke="#111" stroke-width="1.5"/><path d="M546.00 2 V8.2" stroke="#333" stroke-width="0.9"/><path d="M550.08 1.8 h5.60" stroke="#111" stroke-width="1.5"/><path d="M552.88 2 V8.2" stroke="#333" stroke-width="0.9"/><path d="M556.95 1.8 h5.60" stroke="#111" stroke-width="1.5"/><path d="M559.75 2 V8.2" stroke="#333" stroke-width="0.9"/><path d="M563.83 1.8 h5.60" stroke="#111" stroke-width="1.5"/><path d="M566.62 2 V8.2" stroke="#333" stroke-width="0.9"/><path d="M570.70 1.8 h5.60" stroke="#111" stroke-width="1.5"/><path d="M573.50 2 V8.2" stroke="#333" stroke-width="0.9"/><path d="M577.58 1.8 h5.60" stroke="#111" stroke-width="1.5"/><path d="M580.38 2 V8.2" stroke="#333" stroke-width="0.9"/><path d="M584.45 1.8 h5.60" stroke="#111" stroke-width="1.5"/><path d="M587.25 2 V8.2" stroke="#333" stroke-width="0.9"/><path d="M591.33 1.8 h5.60" stroke="#111" stroke-width="1.5"/><path d="M594.12 2 V8.2" stroke="#333" stroke-width="0.9"/><path d="M598.20 1.8 h5.60" stroke="#111" stroke-width="1.5"/><path d="M601.00 2 V8.2" stroke="#333" stroke-width="0.9"/><path d="M605.08 1.8 h5.60" stroke="#111" stroke-width="1.5"/><path d="M607.88 2 V8.2" stroke="#333" stroke-width="0.9"/><path d="M611.95 1.8 h5.60" stroke="#111" stroke-width="1.5"/><path d="M614.75 2 V8.2" stroke="#333" stroke-width="0.9"/><path d="M618.83 1.8 h5.60" stroke="#111" stroke-width="1.5"/><path d="M621.62 2 V8.2" stroke="#333" stroke-width="0.9"/><path d="M625.70 1.8 h5.60" stroke="#111" stroke-width="1.5"/><path d="M628.50 2 V8.2" stroke="#333" stroke-width="0.9"/><path d="M632.58 1.8 h5.60" stroke="#111" stroke-width="1.5"/><path d="M635.38 2 V8.2" stroke="#333" stroke-width="0.9"/></svg>
<span class="t" style="left:105.8px;top:65.45px;font-size:10.5px;color:#000;transform:scaleX(0.667);">4</span>
<span class="t" style="left:133.3px;top:65.45px;font-size:10.5px;color:#000;transform:scaleX(0.667);">8</span>
<span class="t" style="left:160.2px;top:65.45px;font-size:10.5px;color:#000;transform:scaleX(0.710);">12</span>
<span class="t" style="left:187.7px;top:65.45px;font-size:10.5px;color:#000;transform:scaleX(0.710);">16</span>
<span class="t" style="left:215.2px;top:65.45px;font-size:10.5px;color:#000;transform:scaleX(0.710);">20</span>
<span class="t" style="left:242.7px;top:65.45px;font-size:10.5px;color:#000;transform:scaleX(0.710);">24</span>
<span class="t" style="left:270.2px;top:65.45px;font-size:10.5px;color:#000;transform:scaleX(0.710);">28</span>
<span class="t" style="left:297.7px;top:65.45px;font-size:10.5px;color:#000;transform:scaleX(0.710);">32</span>
<span class="t" style="left:325.2px;top:65.45px;font-size:10.5px;color:#000;transform:scaleX(0.710);">36</span>
<span class="t" style="left:352.7px;top:65.45px;font-size:10.5px;color:#000;transform:scaleX(0.710);">40</span>
<span class="t" style="left:380.2px;top:65.45px;font-size:10.5px;color:#000;transform:scaleX(0.710);">44</span>
<span class="t" style="left:407.7px;top:65.45px;font-size:10.5px;color:#000;transform:scaleX(0.710);">48</span>
<span class="t" style="left:435.2px;top:65.45px;font-size:10.5px;color:#000;transform:scaleX(0.710);">52</span>
<span class="t" style="left:462.7px;top:65.45px;font-size:10.5px;color:#000;transform:scaleX(0.710);">56</span>
<span class="t" style="left:490.2px;top:65.45px;font-size:10.5px;color:#000;transform:scaleX(0.710);">60</span>
<span class="t" style="left:517.7px;top:65.45px;font-size:10.5px;color:#000;transform:scaleX(0.710);">64</span>
<span class="t" style="left:545.2px;top:65.45px;font-size:10.5px;color:#000;transform:scaleX(0.710);">68</span>
<span class="t" style="left:572.7px;top:65.45px;font-size:10.5px;color:#000;transform:scaleX(0.710);">72</span>
<span class="t" style="left:600.2px;top:65.45px;font-size:10.5px;color:#000;transform:scaleX(0.710);">76</span>
<span class="t" style="left:627.7px;top:65.45px;font-size:10.5px;color:#000;transform:scaleX(0.710);">80</span>
<svg style="left:0px;top:0px" width="80" height="434" viewBox="0 0 80 434" ><rect x="66.2" y="77" width="3.3" height="355.5" rx="1.2" fill="#0a0a0a"/><path d="M69 78.94 H73.2" stroke="#111" stroke-width="1.1"/><path d="M69 82.38 H78" stroke="#111" stroke-width="1.1"/><path d="M69 85.81 H73.2" stroke="#111" stroke-width="1.1"/><path d="M69 89.25 H78" stroke="#111" stroke-width="1.1"/><path d="M69 92.69 H73.2" stroke="#111" stroke-width="1.1"/><path d="M69 96.12 H78" stroke="#111" stroke-width="1.1"/><path d="M69 99.56 H73.2" stroke="#111" stroke-width="1.1"/><path d="M69 103.00 H78" stroke="#111" stroke-width="1.1"/><path d="M69 106.44 H73.2" stroke="#111" stroke-width="1.1"/><path d="M69 109.88 H78" stroke="#111" stroke-width="1.1"/><path d="M69 113.31 H73.2" stroke="#111" stroke-width="1.1"/><path d="M69 116.75 H78" stroke="#111" stroke-width="1.1"/><path d="M69 120.19 H73.2" stroke="#111" stroke-width="1.1"/><path d="M69 123.62 H78" stroke="#111" stroke-width="1.1"/><path d="M69 127.06 H73.2" stroke="#111" stroke-width="1.1"/><path d="M69 130.50 H78" stroke="#111" stroke-width="1.1"/><path d="M69 133.94 H73.2" stroke="#111" stroke-width="1.1"/><path d="M69 137.38 H78" stroke="#111" stroke-width="1.1"/><path d="M69 140.81 H73.2" stroke="#111" stroke-width="1.1"/><path d="M69 144.25 H78" stroke="#111" stroke-width="1.1"/><path d="M69 147.69 H73.2" stroke="#111" stroke-width="1.1"/><path d="M69 151.12 H78" stroke="#111" stroke-width="1.1"/><path d="M69 154.56 H73.2" stroke="#111" stroke-width="1.1"/><path d="M69 158.00 H78" stroke="#111" stroke-width="1.1"/><path d="M69 161.44 H73.2" stroke="#111" stroke-width="1.1"/><path d="M69 164.88 H78" stroke="#111" stroke-width="1.1"/><path d="M69 168.31 H73.2" stroke="#111" stroke-width="1.1"/><path d="M69 171.75 H78" stroke="#111" stroke-width="1.1"/><path d="M69 175.19 H73.2" stroke="#111" stroke-width="1.1"/><path d="M69 178.62 H78" stroke="#111" stroke-width="1.1"/><path d="M69 182.06 H73.2" stroke="#111" stroke-width="1.1"/><path d="M69 185.50 H78" stroke="#111" stroke-width="1.1"/><path d="M69 188.94 H73.2" stroke="#111" stroke-width="1.1"/><path d="M69 192.38 H78" stroke="#111" stroke-width="1.1"/><path d="M69 195.81 H73.2" stroke="#111" stroke-width="1.1"/><path d="M69 199.25 H78" stroke="#111" stroke-width="1.1"/><path d="M69 202.69 H73.2" stroke="#111" stroke-width="1.1"/><path d="M69 206.12 H78" stroke="#111" stroke-width="1.1"/><path d="M69 209.56 H73.2" stroke="#111" stroke-width="1.1"/><path d="M69 213.00 H78" stroke="#111" stroke-width="1.1"/><path d="M69 216.44 H73.2" stroke="#111" stroke-width="1.1"/><path d="M69 219.88 H78" stroke="#111" stroke-width="1.1"/><path d="M69 223.31 H73.2" stroke="#111" stroke-width="1.1"/><path d="M69 226.75 H78" stroke="#111" stroke-width="1.1"/><path d="M69 230.19 H73.2" stroke="#111" stroke-width="1.1"/><path d="M69 233.62 H78" stroke="#111" stroke-width="1.1"/><path d="M69 237.06 H73.2" stroke="#111" stroke-width="1.1"/><path d="M69 240.50 H78" stroke="#111" stroke-width="1.1"/><path d="M69 243.94 H73.2" stroke="#111" stroke-width="1.1"/><path d="M69 247.38 H78" stroke="#111" stroke-width="1.1"/><path d="M69 250.81 H73.2" stroke="#111" stroke-width="1.1"/><path d="M69 254.25 H78" stroke="#111" stroke-width="1.1"/><path d="M69 257.69 H73.2" stroke="#111" stroke-width="1.1"/><path d="M69 261.12 H78" stroke="#111" stroke-width="1.1"/><path d="M69 264.56 H73.2" stroke="#111" stroke-width="1.1"/><path d="M69 268.00 H78" stroke="#111" stroke-width="1.1"/><path d="M69 271.44 H73.2" stroke="#111" stroke-width="1.1"/><path d="M69 274.88 H78" stroke="#111" stroke-width="1.1"/><path d="M69 278.31 H73.2" stroke="#111" stroke-width="1.1"/><path d="M69 281.75 H78" stroke="#111" stroke-width="1.1"/><path d="M69 285.19 H73.2" stroke="#111" stroke-width="1.1"/><path d="M69 288.62 H78" stroke="#111" stroke-width="1.1"/><path d="M69 292.06 H73.2" stroke="#111" stroke-width="1.1"/><path d="M69 295.50 H78" stroke="#111" stroke-width="1.1"/><path d="M69 298.94 H73.2" stroke="#111" stroke-width="1.1"/><path d="M69 302.38 H78" stroke="#111" stroke-width="1.1"/><path d="M69 305.81 H73.2" stroke="#111" stroke-width="1.1"/><path d="M69 309.25 H78" stroke="#111" stroke-width="1.1"/><path d="M69 312.69 H73.2" stroke="#111" stroke-width="1.1"/><path d="M69 316.12 H78" stroke="#111" stroke-width="1.1"/><path d="M69 319.56 H73.2" stroke="#111" stroke-width="1.1"/><path d="M69 323.00 H78" stroke="#111" stroke-width="1.1"/><path d="M69 326.44 H73.2" stroke="#111" stroke-width="1.1"/><path d="M69 329.88 H78" stroke="#111" stroke-width="1.1"/><path d="M69 333.31 H73.2" stroke="#111" stroke-width="1.1"/><path d="M69 336.75 H78" stroke="#111" stroke-width="1.1"/><path d="M69 340.19 H73.2" stroke="#111" stroke-width="1.1"/><path d="M69 343.62 H78" stroke="#111" stroke-width="1.1"/><path d="M69 347.06 H73.2" stroke="#111" stroke-width="1.1"/><path d="M69 350.50 H78" stroke="#111" stroke-width="1.1"/><path d="M69 353.94 H73.2" stroke="#111" stroke-width="1.1"/><path d="M69 357.38 H78" stroke="#111" stroke-width="1.1"/><path d="M69 360.81 H73.2" stroke="#111" stroke-width="1.1"/><path d="M69 364.25 H78" stroke="#111" stroke-width="1.1"/><path d="M69 367.69 H73.2" stroke="#111" stroke-width="1.1"/><path d="M69 371.12 H78" stroke="#111" stroke-width="1.1"/><path d="M69 374.56 H73.2" stroke="#111" stroke-width="1.1"/><path d="M69 378.00 H78" stroke="#111" stroke-width="1.1"/><path d="M69 381.44 H73.2" stroke="#111" stroke-width="1.1"/><path d="M69 384.88 H78" stroke="#111" stroke-width="1.1"/><path d="M69 388.31 H73.2" stroke="#111" stroke-width="1.1"/><path d="M69 391.75 H78" stroke="#111" stroke-width="1.1"/><path d="M69 395.19 H73.2" stroke="#111" stroke-width="1.1"/><path d="M69 398.62 H78" stroke="#111" stroke-width="1.1"/><path d="M69 402.06 H73.2" stroke="#111" stroke-width="1.1"/><path d="M69 405.50 H78" stroke="#111" stroke-width="1.1"/><path d="M69 408.94 H73.2" stroke="#111" stroke-width="1.1"/><path d="M69 412.38 H78" stroke="#111" stroke-width="1.1"/><path d="M69 415.81 H73.2" stroke="#111" stroke-width="1.1"/><path d="M69 419.25 H78" stroke="#111" stroke-width="1.1"/><path d="M69 422.69 H73.2" stroke="#111" stroke-width="1.1"/><path d="M69 426.12 H78" stroke="#111" stroke-width="1.1"/><path d="M69 429.56 H73.2" stroke="#111" stroke-width="1.1"/></svg>
<span class="t" style="left:70.2px;top:103.65px;font-size:7.5px;color:#000;font-weight:bold;transform:scaleX(0.863);">4</span>
<span class="t" style="left:70.2px;top:131.15px;font-size:7.5px;color:#000;font-weight:bold;transform:scaleX(0.863);">8</span>
<span class="t" style="left:70.8px;top:158.65px;font-size:7.5px;color:#000;font-weight:bold;transform:scaleX(0.815);">12</span>
<span class="t" style="left:70.8px;top:186.15px;font-size:7.5px;color:#000;font-weight:bold;transform:scaleX(0.815);">16</span>
<span class="t" style="left:70.8px;top:213.65px;font-size:7.5px;color:#000;font-weight:bold;transform:scaleX(0.815);">20</span>
<span class="t" style="left:70.8px;top:241.15px;font-size:7.5px;color:#000;font-weight:bold;transform:scaleX(0.815);">24</span>
<span class="t" style="left:70.8px;top:268.65px;font-size:7.5px;color:#000;font-weight:bold;transform:scaleX(0.815);">28</span>
<span class="t" style="left:70.8px;top:296.15px;font-size:7.5px;color:#000;font-weight:bold;transform:scaleX(0.815);">32</span>
<span class="t" style="left:70.8px;top:323.65px;font-size:7.5px;color:#000;font-weight:bold;transform:scaleX(0.815);">36</span>
<span class="t" style="left:70.8px;top:351.15px;font-size:7.5px;color:#000;font-weight:bold;transform:scaleX(0.815);">40</span>
<span class="t" style="left:70.8px;top:378.65px;font-size:7.5px;color:#000;font-weight:bold;transform:scaleX(0.815);">44</span>
<span class="t" style="left:70.8px;top:406.15px;font-size:7.5px;color:#000;font-weight:bold;transform:scaleX(0.815);">48</span>
<svg style="left:78.1px;top:75.5px" width="375.75" height="250" viewBox="0 0 375.75 250" ><rect x="0" y="0" width="375.75" height="250" fill="#eedfcd"/><defs><g id="br"><path d="M14 7 L20 15 L25 22 L32 32 L38 38 L40.5 46" fill="none" stroke="#c8a576" stroke-width="1.4"/><path d="M19 13.5 L28 15.5 L37 17 L44 21 L49 25.5" fill="none" stroke="#c8a576" stroke-width="1.2"/><path d="M25 22 L18 28 L12 30" fill="none" stroke="#c8a576" stroke-width="1.1"/><path d="M32 32 L26 36 M38 38 L43 36 M39 42 L46 47" fill="none" stroke="#c8a576" stroke-width="1.1"/><path d="M22.5 10.8 Q32.7 10.9 39.0 0.8 Q27.1 1.7 22.5 10.8z" fill="#5f977a"/><path d="M36.5 16.3 Q44.3 19.5 51.5 13.0 Q42.2 10.1 36.5 16.3z" fill="#659d80"/><path d="M47.5 25.8 Q54.6 28.1 60.0 21.5 Q51.7 19.6 47.5 25.8z" fill="#52866a"/><path d="M14.5 23.5 Q7.1 19.9 0.5 26.5 Q9.3 29.8 14.5 23.5z" fill="#659d80"/><path d="M17.5 31.5 Q11.4 33.0 12.5 40.0 Q19.1 37.6 17.5 31.5z" fill="#508a6e"/><path d="M27.0 34.0 Q22.8 40.7 29.5 46.5 Q33.4 38.6 27.0 34.0z" fill="#5a9878"/><path d="M47.5 38.5 Q48.3 46.3 57.0 48.5 Q55.3 39.7 47.5 38.5z" fill="#589474"/><ellipse cx="29.5" cy="21.5" rx="3.4" ry="3.7" fill="#8f6896"/><ellipse cx="10.5" cy="31" rx="3.6" ry="3.4" fill="#8f6896"/><ellipse cx="18" cy="31" rx="3.4" ry="3.4" fill="#8f6896"/><ellipse cx="24.5" cy="34" rx="3.4" ry="3.4" fill="#8f6896"/><ellipse cx="43.5" cy="36.5" rx="3.6" ry="3.6" fill="#8f6896"/><ellipse cx="37.5" cy="45" rx="2.9" ry="3.4" fill="#8f6896"/><ellipse cx="47" cy="48" rx="3.4" ry="2.9" fill="#8f6896"/><ellipse cx="29.9" cy="20.7" rx="1.7" ry="1.665" fill="#a686ae"/><ellipse cx="10.9" cy="30.2" rx="1.8" ry="1.53" fill="#a686ae"/><ellipse cx="18.4" cy="30.2" rx="1.7" ry="1.53" fill="#a686ae"/><ellipse cx="24.9" cy="33.2" rx="1.7" ry="1.53" fill="#a686ae"/><ellipse cx="43.9" cy="35.7" rx="1.8" ry="1.62" fill="#a686ae"/><ellipse cx="37.9" cy="44.2" rx="1.45" ry="1.53" fill="#a686ae"/><ellipse cx="47.4" cy="47.2" rx="1.7" ry="1.305" fill="#a686ae"/></g><g id="sp"><path d="M21.5 0.5 L16 4.8" stroke="#c8a576" stroke-width="1.4" fill="none"/><path d="M8.5 5.2 Q5.7 0.4 0.0 3.0 Q3.7 8.0 8.5 5.2z" fill="#5f977a"/><path d="M15.3 5.5 Q9.6 10.5 13.8 18.0 Q19.7 11.7 15.3 5.5z" fill="#50886e"/><ellipse cx="11.5" cy="4.7" rx="3.4" ry="3.1" fill="#8f6896"/><ellipse cx="12" cy="4" rx="1.7" ry="1.4" fill="#a686ae"/></g></defs><g transform="translate(0.4 0)"><use href="#br" x="99.5" y="39.5"/><use href="#br" transform="translate(300.5 39.5) scale(-1 1)"/><use href="#br" x="99.5" y="109.5"/><use href="#br" transform="translate(300.5 109.5) scale(-1 1)"/><use href="#br" x="99.5" y="179.5"/><use href="#br" transform="translate(300.5 179.5) scale(-1 1)"/><use href="#sp" x="171" y="42"/><use href="#sp" transform="translate(229 42) scale(-1 1)"/><polyline points="155.5,233.3 173.5,228.5" fill="none" stroke="#dfb5a5" stroke-width="1.2"/><polyline points="153.5,235.5 183.5,238" fill="none" stroke="#dfb5a5" stroke-width="1.2"/><polyline points="174.5,247.5 199.5,237.5" fill="none" stroke="#dfb5a5" stroke-width="1.2"/><polyline points="203.5,229.5 241.5,244.5" fill="none" stroke="#dfb5a5" stroke-width="1.2"/><polyline points="221.5,228 237.5,233.5" fill="none" stroke="#dfb5a5" stroke-width="1.2"/><polygon points="198.7,209 200.4,198.5 202.1,209" fill="#3f8562"/><polygon points="203.5,216.8 205.5,201.3 207.3,216.8" fill="#479068"/><polygon points="184.6,211.9 195.1,211.9 195.1,216.7 184.6,216.7" fill="#efb87c"/><polygon points="195,212 199,207.1 203.5,212.6 203.5,216.7 195,216.7" fill="#f5c790"/><polygon points="184.5,212.1 188.4,207.5 198.8,206.9 195.1,212.1" fill="#cf8454"/><polyline points="195,212.5 199,207.1 203.7,212.9" fill="none" stroke="#b96a40" stroke-width="0.8"/><polygon points="185.9,213.3 193.4,213.3 193.4,215.1 185.9,215.1" fill="#f3e2bc"/><polygon points="181.5,220.5 212.3,221.1 212.3,226.1 181.5,226.4" fill="#f5c790"/><polygon points="190,216.7 194.1,216.7 194.1,221.5 190,221.5" fill="#f5c790"/><polygon points="204.6,221.5 208.4,217 212.8,221.5" fill="#f5c790"/><polygon points="180.7,220.9 185.2,216.4 193.5,216.4 189.9,220.9" fill="#cf8454"/><polygon points="193.7,221.5 198.4,216.7 208.1,216.7 204.6,221.5" fill="#cf8454"/><polyline points="204.6,221.5 208.4,216.9 213,221.7" fill="none" stroke="#b96a40" stroke-width="0.8"/><polyline points="190,226.5 190,221.1" fill="none" stroke="#b96a40" stroke-width="0.8"/><polyline points="204.6,226 204.6,221.5" fill="none" stroke="#b96a40" stroke-width="0.7"/><ellipse cx="174.1" cy="226.7" rx="1.7" ry="1.6" fill="#62b48e"/><ellipse cx="178.1" cy="225.1" rx="2.6" ry="2.8" fill="#4aa67e"/><ellipse cx="195.5" cy="226.2" rx="2.9" ry="2.8" fill="#3fa079"/><ellipse cx="202.1" cy="226.8" rx="2.4" ry="1.7" fill="#8ed0a8"/><ellipse cx="213.7" cy="225.8" rx="4.7" ry="4.4" fill="#3fa079"/><ellipse cx="224.4" cy="225.1" rx="4.1" ry="3.7" fill="#3a9a76"/></g><path d="M12.525 0 V250 M25.05 0 V250 M37.575 0 V250 M50.1 0 V250 M62.625 0 V250 M75.15 0 V250 M87.675 0 V250 M100.2 0 V250 M112.725 0 V250 M125.25 0 V250 M137.775 0 V250 M150.3 0 V250 M162.825 0 V250 M175.35 0 V250 M187.875 0 V250 M200.4 0 V250 M212.925 0 V250 M225.45 0 V250 M237.975 0 V250 M250.5 0 V250 M263.025 0 V250 M275.55 0 V250 M288.075 0 V250 M300.6 0 V250 M313.125 0 V250 M325.65 0 V250 M338.175 0 V250 M350.7 0 V250 M363.225 0 V250 M375.75 0 V250 M0 12.5 H375.75 M0 25 H375.75 M0 37.5 H375.75 M0 50 H375.75 M0 62.5 H375.75 M0 75 H375.75 M0 87.5 H375.75 M0 100 H375.75 M0 112.5 H375.75 M0 125 H375.75 M0 137.5 H375.75 M0 150 H375.75 M0 162.5 H375.75 M0 175 H375.75 M0 187.5 H375.75 M0 200 H375.75 M0 212.5 H375.75 M0 225 H375.75 M0 237.5 H375.75 M0 250 H375.75 " stroke="#8b8178" stroke-width="0.85" fill="none"/></svg>
<div style="left:66px;top:432.5px;width:574px;height:13.5px;background:#ece9d8;"></div>
<div style="left:68px;top:433.5px;width:92.5px;height:11.5px;background:#ece9d8;border-left:1px solid #fbfaf4;border-right:1px solid #77746a;border-bottom:1px solid #77746a;box-sizing:border-box;"></div>
<span class="t" style="left:70.8px;top:435.6px;font-size:8px;color:#222;transform:scaleX(0.882);">макет домик с оливочками</span>
<div style="left:163px;top:433.5px;width:23.5px;height:11.5px;background:#ece9d8;border-left:1px solid #fbfaf4;border-right:1px solid #77746a;border-bottom:1px solid #77746a;box-sizing:border-box;"></div>
<span class="t" style="left:165.8px;top:435.6px;font-size:8px;color:#222;transform:scaleX(0.820);">проба</span>
<div style="left:189px;top:433.5px;width:170px;height:11.5px;background:#ece9d8;border-left:1px solid #fbfaf4;border-right:1px solid #77746a;border-bottom:1px solid #77746a;box-sizing:border-box;"></div>
<span class="t" style="left:191.8px;top:435.6px;font-size:8px;color:#222;transform:scaleX(0.855);">7 верхн левая гроздь (с частью ниж ветки для стык)</span>
<div style="left:362.5px;top:434.3px;width:68px;height:9.2px;background:#f6f5ee;border:1px solid #6e6b60;box-sizing:border-box;"></div>
<span class="t" style="left:365.7px;top:434.8px;font-size:7.6px;color:#111;transform:scaleX(0.904);">последний вариант</span>
<div style="left:433.5px;top:433.5px;width:29px;height:11.5px;background:#ece9d8;border-left:1px solid #fbfaf4;border-right:1px solid #77746a;border-bottom:1px solid #77746a;box-sizing:border-box;"></div>
<span class="t" style="left:436.3px;top:435.6px;font-size:8px;color:#222;transform:scaleX(0.821);">проба 2</span>
<div style="left:465.5px;top:433.5px;width:99.5px;height:11.5px;background:#ece9d8;border-left:1px solid #fbfaf4;border-right:1px solid #77746a;border-bottom:1px solid #77746a;box-sizing:border-box;"></div>
<span class="t" style="left:468.3px;top:435.6px;font-size:8px;color:#222;transform:scaleX(0.867);">1 дом (не весь для стыковки)</span>
<div style="left:568px;top:433.5px;width:50px;height:11.5px;background:#ece9d8;border-left:1px solid #fbfaf4;border-right:1px solid #77746a;border-bottom:1px solid #77746a;box-sizing:border-box;"></div>
<span class="t" style="left:570.8px;top:435.6px;font-size:8px;color:#222;transform:scaleX(0.757);">2 правая ниж гр</span>
<div style="left:618px;top:433px;width:22px;height:12.5px;background:#ece9d8;"></div>
<div style="left:619.5px;top:433.5px;width:9.5px;height:11px;background:#ece9d8;border:1px solid #fbfaf4;border-right-color:#77746a;border-bottom-color:#77746a;box-sizing:border-box;"><svg style="left:0px;top:0px" width="8" height="9" viewBox="0 0 8 9" ><path d="M5.2 2 v5 l-2.8 -2.5z" fill="#111"/></svg></div>
<div style="left:629.5px;top:433.5px;width:9.5px;height:11px;background:#ece9d8;border:1px solid #fbfaf4;border-right-color:#77746a;border-bottom-color:#77746a;box-sizing:border-box;"><svg style="left:0px;top:0px" width="8" height="9" viewBox="0 0 8 9" ><path d="M3 2 v5 l2.8 -2.5z" fill="#111"/></svg></div>
<div style="left:66px;top:432.5px;width:1.5px;height:12px;background:#c8c5b4;"></div>
<div style="left:0px;top:445.8px;width:640px;height:13.7px;background:#ece9d8;border-top:1px solid #c6c3b2;box-sizing:border-box;"></div>
<div style="left:0px;top:447px;width:640px;height:1px;background:#f8f7f0;"></div>
<div style="left:0px;top:443.6px;width:66px;height:2.6px;background:linear-gradient(#dad7c8,#c9c6b6);"></div>
<div style="left:430.5px;top:447.5px;width:1px;height:10.5px;background:#b4b1a0;"></div>
<div style="left:431.5px;top:447.5px;width:1px;height:10.5px;background:#fbfaf4;"></div>
<div style="left:0px;top:457.6px;width:640px;height:1.4px;background:#fbfaf6;"></div>
<span class="t" style="left:6.5px;top:448.7px;font-size:6px;color:#333;transform:scaleX(0.582);letter-spacing:0.7px;">-------</span>
<span class="t" style="left:535.5px;top:448.3px;font-size:8px;color:#111;transform:scaleX(0.834);">Colour: 910</span>
<div style="left:0px;top:459px;width:640px;height:21px;background:linear-gradient(#2a62d8 0,#4a8cf6 7%,#3272ea 16%,#265fdc 28%,#2560dd 80%,#1d50c6 100%);"></div>
<div style="left:0px;top:460px;width:59px;height:20px;background:linear-gradient(#3e9a40 0,#62bc62 10%,#46a648 24%,#3a9a3c 50%,#379638 75%,#2a7c2e 100%);border-radius:0 8px 8px 0;box-shadow:1px 0 2px #1a3c90;"></div>
<svg style="left:0px;top:0px" width="60" height="480" viewBox="0 0 60 480" ><path d="M8.2 465 c1.6 -1.2 3.4 -1.2 4.8 -0.3 l-1.2 4.6 c-1.3 -0.8 -3 -0.8 -4.8 0.3z" fill="#e85a30"/><path d="M13.6 465.2 c1.6 1.1 3.4 0.8 5 -0.4 l-1.2 4.6 c-1.6 1.1 -3.4 1.3 -5 0.4z" fill="#7cc84a"/><path d="M6.8 470.6 c1.6 -1.2 3.4 -1.2 4.8 -0.3 l-1.2 4.6 c-1.3 -0.8 -3 -0.8 -4.8 0.3z" fill="#4a8ef0"/><path d="M12.2 470.8 c1.6 1.1 3.4 0.8 5 -0.4 l-1.2 4.6 c-1.6 1.1 -3.4 1.3 -5 0.4z" fill="#f8d040"/></svg>
<span class="t" style="left:22px;top:464.5px;font-size:11px;color:#fff;font-weight:bold;font-style:italic;transform:scaleX(0.958);text-shadow:0.7px 0.7px 1px #1c4a1c;">пуск</span>
<svg style="left:62px;top:462px" width="8" height="16" viewBox="0 0 8 16" ><g fill="#1a48b8"><rect x="2" y="2" width="1.2" height="1.2"/><rect x="4.5" y="4" width="1.2" height="1.2"/><rect x="2" y="6" width="1.2" height="1.2"/><rect x="4.5" y="8" width="1.2" height="1.2"/><rect x="2" y="10" width="1.2" height="1.2"/><rect x="4.5" y="12" width="1.2" height="1.2"/></g></svg>
<div style="left:72.5px;top:461.3px;width:83px;height:17.2px;background:#2152c0;border-radius:2px;box-shadow:inset 0.5px 0.5px 1px #123a94;"></div>
<div style="left:156.5px;top:461.3px;width:80px;height:17.2px;background:linear-gradient(#4a8cf4,#3b7ce8 30%,#3470de);border-radius:2px;"></div>
<div style="left:237.5px;top:461.3px;width:81px;height:17.2px;background:linear-gradient(#4a8cf4,#3b7ce8 30%,#3470de);border-radius:2px;"></div>
<svg style="left:0px;top:0px" width="640" height="480" viewBox="0 0 640 480" ><path d="M81 466 l3.5 -2 v8 l-3.5 1.5z" fill="#2a7a3a"/><path d="M84.5 464 l3.5 -0.5 l-1 5.5 l-2.5 3z" fill="#e8d040"/><rect x="82.5" y="467" width="2.5" height="3.5" fill="#1a3ab0"/><path d="M163 466 l4 3 l4 -3 l-2.5 4.5 l2 3.5 l-3.5 -2 l-3.5 2 l2 -3.5z" fill="#eef" stroke="#223" stroke-width="0.7"/><path d="M243.5 467 h3.5 l1 1 h4.5 v6 h-9z" fill="#f4d060" stroke="#a88420" stroke-width="0.6"/><path d="M243.5 469.5 h9" stroke="#fff0a0" stroke-width="0.8"/><g fill="#1a48b8"><rect x="322.5" y="464" width="1.2" height="1.2"/><rect x="324.8" y="466" width="1.2" height="1.2"/><rect x="322.5" y="468" width="1.2" height="1.2"/><rect x="324.8" y="470" width="1.2" height="1.2"/><rect x="322.5" y="472" width="1.2" height="1.2"/><rect x="324.8" y="474" width="1.2" height="1.2"/></g><rect x="331.5" y="465.5" width="9.5" height="10" fill="#f4f4f4" stroke="#334" stroke-width="0.8"/><rect x="331.5" y="465.5" width="9.5" height="2.5" fill="#2a3a6a"/><path d="M333.5 471 h5.5 M333.5 473 h5.5" stroke="#c03030" stroke-width="1"/><rect x="346" y="465.5" width="10" height="10" fill="#f8f8ff" stroke="#2a50c0" stroke-width="1"/><rect x="360" y="465.5" width="10" height="10" fill="#e8f8e8" stroke="#208838" stroke-width="1"/><path d="M362.5 468 l5 5.5 M367.5 468 l-5 5.5" stroke="#18882c" stroke-width="1.6"/><rect x="374" y="465.5" width="10" height="10" fill="#f8e0c0" stroke="#e06020" stroke-width="1"/><circle cx="379" cy="470.5" r="2.8" fill="#e05020"/><rect x="388" y="465.5" width="10" height="10" fill="#f8e890" stroke="#d8a020" stroke-width="1"/><circle cx="393" cy="470.5" r="3" fill="#fff8d0" stroke="#c08810" stroke-width="0.9"/><circle cx="407.5" cy="470.5" r="5" fill="#c8a0b0" stroke="#b02030" stroke-width="1.4"/><circle cx="407.5" cy="470.5" r="2" fill="#e8e0f0" stroke="#b02030" stroke-width="0.8"/></svg>
<span class="t" style="left:347.5px;top:466.7px;font-size:8px;color:#2040c0;font-weight:bold;transform:scaleX(0.926);">W</span>
<span class="t" style="left:362px;top:466.7px;font-size:8px;color:#18882c;font-weight:bold;transform:scaleX(1.123);">X</span>
<span class="t" style="left:91px;top:466.4px;font-size:8.2px;color:#fff;transform:scaleX(0.826);">Cross Stitch Pro...</span>
<span class="t" style="left:172.5px;top:466.4px;font-size:8.2px;color:#fff;transform:scaleX(0.797);">Embird 2003</span>
<span class="t" style="left:255.5px;top:466.4px;font-size:8.2px;color:#fff;transform:scaleX(0.764);">1МОИ ДИЗАЙНЫ</span>
<div style="left:559px;top:459.3px;width:81px;height:20.7px;background:linear-gradient(#3aa8f4 0,#1a96ec 10%,#1290e8 60%,#0f80d4 100%);border-left:1px solid #0e5cc0;box-sizing:border-box;"></div>
<svg style="left:0px;top:0px" width="640" height="480" viewBox="0 0 640 480" ><circle cx="559.5" cy="470" r="5" fill="#3a8af0" stroke="#cfe4ff" stroke-width="0.9"/><path d="M560.8 467.5 l-2.5 2.5 l2.5 2.5" stroke="#fff" stroke-width="1.3" fill="none"/><circle cx="571" cy="470" r="4.8" fill="#f0c030" stroke="#b88010" stroke-width="0.8"/><circle cx="571" cy="470" r="2" fill="#c07818"/><path d="M578.5 467 l4 -1.5 l5 3 v4 l-4 2 l-5 -3.5z" fill="#c8ccd4" stroke="#8890a0" stroke-width="0.6"/><rect x="589.5" y="465.5" width="6" height="8" fill="#e8e8e0" stroke="#445" stroke-width="0.7"/><circle cx="596" cy="473" r="2.6" fill="#38a838" stroke="#fff" stroke-width="0.6"/><circle cx="605.5" cy="470" r="4.8" fill="#2a58b8" stroke="#9ab8e8" stroke-width="0.8"/><path d="M604.5 467.5 h2 v5 h-2z" fill="#e8f0ff"/></svg>
<span class="t" style="left:543px;top:466.5px;font-size:8px;color:#fff;transform:scaleX(0.831);">RL</span>
<span class="t" style="left:614px;top:466.5px;font-size:8px;color:#fff;transform:scaleX(0.924);">18:30</span>
</body></html>
